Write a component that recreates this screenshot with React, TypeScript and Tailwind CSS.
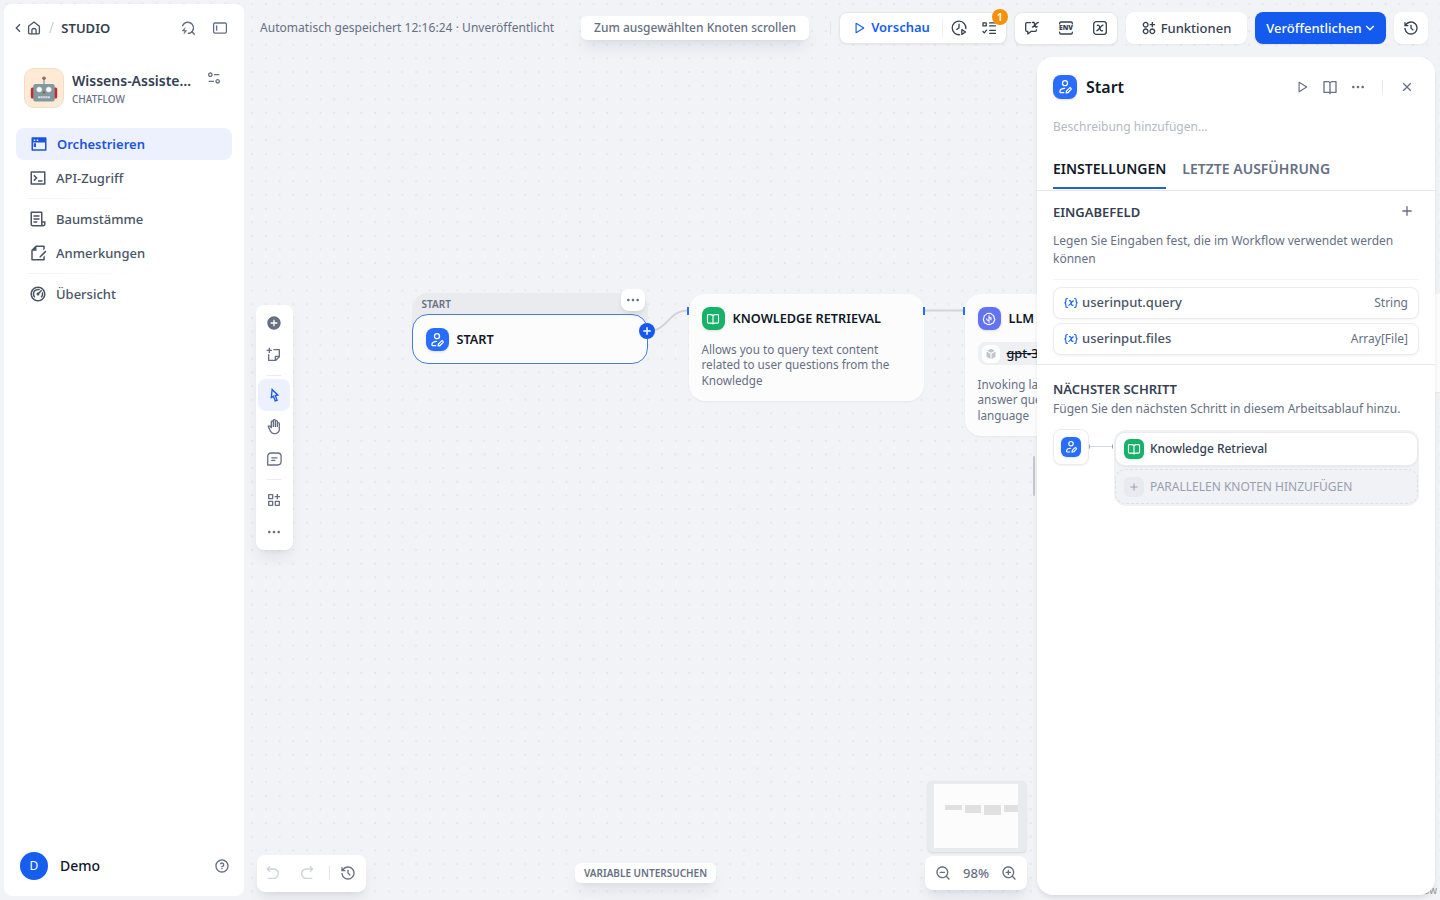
import type { ReactNode } from 'react'
import {
  RiAddCircleFill,
  RiAddLine,
  RiApps2AddLine,
  RiArrowDownSLine,
  RiArrowGoBackLine,
  RiArrowGoForwardLine,
  RiArrowLeftSLine,
  RiBookOpenLine,
  RiCloseLine,
  RiCursorLine,
  RiDashboard2Line,
  RiEqualizer2Line,
  RiFileEditLine,
  RiFileList3Line,
  RiFunctionAddLine,
  RiHand,
  RiHistoryLine,
  RiMoreFill,
  RiPlayLargeLine,
  RiQuestionLine,
  RiStickyNoteAddLine,
  RiTerminalBoxLine,
  RiTerminalWindowFill,
  RiZoomInLine,
  RiZoomOutLine,
} from 'react-icons/ri'
import clsx from 'clsx'

type IconProps = { className?: string }

function Stroke({ className, children }: IconProps & { children: ReactNode }) {
  return (
    <svg viewBox="0 0 16 16" fill="none" stroke="currentColor" strokeWidth="1.3" strokeLinecap="round" strokeLinejoin="round" className={className}>
      {children}
    </svg>
  )
}

const HomeIcon = ({ className }: IconProps) => (
  <Stroke className={className}>
    <path d="M2.6 6.2 8 2l5.4 4.2v6.5c0 .7-.4 1.1-1.1 1.1H3.7c-.7 0-1.1-.4-1.1-1.1z" />
    <path d="M5.9 13.6v-3a2.1 2.1 0 0 1 4.2 0v3" />
  </Stroke>
)

const GoToIcon = ({ className }: IconProps) => (
  <Stroke className={className}>
    <path d="M2.6 5.6a5.7 5.7 0 1 1 7.2 7.7H8.4M12 11.7l2.3 2.5" strokeWidth="1.5" />
    <path d="M5 7.7 2 11h2.5l-.6 3.1 3-3.6H4.4z" fill="currentColor" strokeWidth=".4" />
  </Stroke>
)

const SidebarIcon = ({ className }: IconProps) => (
  <Stroke className={className}>
    <rect x="1.6" y="3" width="12.8" height="10.2" rx="1.4" />
    <path d="M4.6 6v4.2" />
  </Stroke>
)

const CommentIcon = ({ className }: IconProps) => (
  <Stroke className={className}>
    <path d="M1.7 14V5.400c0-2 1.400-3.400 3.400-3.400h6.600c2 0 3.400 1.400 3.400 3.400V10.600c0 2-1.400 3.400-3.400 3.400z" />
    <path d="M5.8 6.800h5.200M5.800 9.400h3" />
  </Stroke>
)

const RunHistoryIcon = ({ className }: IconProps) => (
  <Stroke className={className}>
    <path d="M8.6 14.7a6.8 6.8 0 1 1 6.200-6.100M8 4.200V8L5.800 9.400" />
    <path d="M10.8 9.600v4.800l3.700-2.400z" />
  </Stroke>
)

const ChecklistIcon = ({ className }: IconProps) => (
  <Stroke className={className}>
    <path d="M2 2.900h3.200v3H2zM2 11.500l1.300 1.400 2.300-2.700M8.600 2.900h5.800M8.600 5.900h5.800M8.600 10.300h5.800M8.600 13.300h5.800" />
  </Stroke>
)

const ChatVariableIcon = ({ className }: IconProps) => (
  <Stroke className={className}>
    <path d="M6.600 2.600H2.800c-.7 0-1.100.4-1.100 1.100v6.600c0 .7.400 1.100 1.100 1.100h1v2.700l3.200-2.700h4.300c.7 0 1.100-.4 1.100-1.100V9.700" />
    <path d="M8.600 2.400c1.800-.6 1.600.5 2.100 2.300.5 1.700.7 2.700 2.400 2.100M14.200 2.400c-1.700-.3-4.100 4.700-5.700 4.600" strokeWidth="1.500" />
  </Stroke>
)

const EnvIcon = ({ className }: IconProps) => (
  <svg viewBox="0 0 16 16" className={className}>
    <path d="M1.700 3.900V3.200c0-.7.500-1.200 1.200-1.200h10.200c.7 0 1.200.5 1.200 1.200v.7M1.700 12.100v.7c0 .7.500 1.200 1.200 1.200h10.200c.7 0 1.200-.5 1.200-1.200v-.7" fill="none" stroke="currentColor" strokeWidth="1.300" strokeLinecap="round" />
    <text x="8" y="10.300" textAnchor="middle" textLength="14" lengthAdjust="spacingAndGlyphs" fontSize="6.400" fontWeight="900" fill="currentColor">ENV</text>
  </svg>
)

const GlobalVariableIcon = ({ className }: IconProps) => (
  <Stroke className={className}>
    <rect x="1.700" y="1.700" width="12.600" height="12.600" rx="2.600" />
    <path d="M5.300 5.300c2-.7 1.900.5 2.500 2.600.6 2 .9 3.400 2.800 2.700M11 5.200c-2-.2-4.300 5.500-6.200 5.500" />
  </Stroke>
)

const VariableIcon = ({ className }: IconProps) => (
  <Stroke className={className}>
    <path d="M3.900 2.800c-1.500 0-1.800.6-1.800 1.900v1.600c0 1-.4 1.500-1.300 1.700.9.200 1.300.7 1.300 1.700v1.600c0 1.300.3 1.900 1.800 1.900M12.100 2.800c1.500 0 1.800.6 1.800 1.900v1.600c0 1 .4 1.500 1.300 1.700-.9.200-1.300.7-1.300 1.700v1.600c0 1.300-.3 1.900-1.800 1.900" />
    <path d="M6 5.500c1.800-.6 1.700.5 2.100 2.400.4 1.900.6 3.200 2.300 2.600M10.700 5.500c-1.700-.2-3.500 5.200-5.400 5.100" />
  </Stroke>
)

const UserEditIcon = ({ className }: IconProps) => (
  <Stroke className={className}>
    <circle cx="8" cy="4.200" r="2.500" />
    <path d="M7.600 9.400c-2.600 0-4.500 1.400-4.700 3.100-.1.800.4 1.200 1 1.200h2.800" />
    <path d="m9.200 13.800.3-1.900 2.900-2.800c.9-.9 2.400.5 1.500 1.500l-2.800 2.900z" />
  </Stroke>
)

const BookIcon = ({ className }: IconProps) => (
  <Stroke className={className}>
    <path d="M8 4c-.8-.7-1.700-1-2.900-1H2.700c-.6 0-1 .4-1 1v7.700c0 .6.400 1 1 1h3c1 0 1.700.2 2.300.8.600-.6 1.300-.8 2.300-.8h3c.6 0 1-.4 1-1V4c0-.6-.4-1-1-1h-2.400C9.700 3 8.800 3.300 8 4zM8 4v9.300" />
  </Stroke>
)

const BrainIcon = ({ className }: IconProps) => (
  <Stroke className={className}>
    <path d="M8 1.800c-1.400-.6-3 0-3.500 1.400C2.900 3.600 2 5.200 2.300 6.700c-1 1-1 2.700-.1 3.600.1 1.700 1.300 2.700 2.700 2.800.9 1.200 2.200 1.500 3.100.9.900.6 2.200.3 3.100-.9 1.400-.1 2.600-1.100 2.700-2.800.9-.9.900-2.600-.1-3.600.3-1.500-.6-3.100-2.200-3.500C11 1.800 9.400 1.200 8 1.800z" />
    <path d="M8 4.400v7.400M8 9.400H6L5.200 8M8 6.500h2.200v2.300" />
  </Stroke>
)

const RobotIcon = ({ className }: IconProps) => (
  <svg viewBox="0 0 28 28" className={className}>
    <path d="M14 5v6" stroke="#78909c" strokeWidth="1.200" />
    <circle cx="14" cy="4.300" r="1.800" fill="#8b6a6a" />
    <rect x=".8" y="13.500" width="4" height="11" rx="1.500" fill="#c62836" />
    <rect x="23.200" y="13.500" width="4" height="11" rx="1.500" fill="#c62836" />
    <rect x="3.300" y="10" width="21.400" height="17.500" rx="2" fill="#82989f" />
    <circle cx="9.300" cy="15.500" r="2.600" fill="#fff" stroke="#c5d0d4" strokeWidth=".6" />
    <circle cx="18.700" cy="15.500" r="2.600" fill="#fff" stroke="#c5d0d4" strokeWidth=".6" />
    <path d="m14 16.800 1.200 2.400h-2.400z" fill="#c62836" />
    <rect x="8" y="22.300" width="12" height="2" rx=".6" fill="#d7dee0" />
    <path d="M10.500 22.300v2M12.900 22.300v2M15.300 22.300v2M17.700 22.300v2" stroke="#82989f" strokeWidth=".5" />
  </svg>
)

const CubeIcon = ({ className }: IconProps) => (
  <svg viewBox="0 0 16 16" fill="currentColor" className={className}>
    <path d="m8 1 5.200 2.600L8 6.200 2.800 3.600zM2 4.800l5.300 2.700v7L2 11.800zM14 4.800v7l-5.300 2.700v-7z" />
  </svg>
)

function BlockIcon({ className, children }: IconProps & { children: ReactNode }) {
  return <span className={clsx('flex shrink-0 items-center justify-center text-white shadow-sm', className)}>{children}</span>
}

function NavItem({ icon, label, active }: { icon: ReactNode; label: string; active?: boolean }) {
  return (
    <a
      className={clsx(
        'flex h-8 items-center rounded-lg text-[13px]',
        active ? 'bg-[#edf1fd] pl-3.5 font-semibold text-[#1b55de]' : 'pl-[13px] font-medium text-[#495464]',
      )}
    >
      {icon}
      <span className="ml-[9px] pt-px">{label}</span>
    </a>
  )
}

function Sidebar() {
  return (
    <aside className="z-10 my-1 ml-1 flex w-60 shrink-0 flex-col rounded-lg bg-white">
      <div className="flex h-12 items-center px-2.5 text-[#495464]">
        <RiArrowLeftSLine className="-ml-1 size-4" />
        <HomeIcon className="size-4" />
        <span className="ml-[7px] text-sm font-light text-[#b5bac4]">/</span>
        <span className="ml-[7.5px] pt-px text-[13px] font-semibold text-[#354052]">STUDIO</span>
        <GoToIcon className="ml-auto size-4 text-[#676f83]" />
        <SidebarIcon className="mr-1.5 ml-4 size-4 text-[#676f83]" />
      </div>
      <div className="mt-4 flex px-5">
        <div className="flex size-10 shrink-0 items-center justify-center rounded-[10px] border border-[#f3dcc6] bg-[#ffead5]">
          <RobotIcon className="size-7" />
        </div>
        <div className="ml-2 w-[120px]">
          <p className="mt-[3px] truncate text-sm leading-5 font-semibold text-[#354052]">Wissens-Assistent</p>
          <p className="text-[10px] leading-4 font-medium text-[#676f83]">CHATFLOW</p>
        </div>
        <RiEqualizer2Line className="mt-0.5 ml-3.5 size-4 text-[#676f83]" />
      </div>
      <nav className="mt-5 flex flex-col px-3">
        <NavItem active icon={<RiTerminalWindowFill className="size-[18px]" />} label="Orchestrieren" />
        <div className="h-0.5" />
        <NavItem icon={<RiTerminalBoxLine className="size-[18px]" />} label="API-Zugriff" />
        <div className="my-1 ml-3 h-px w-28 bg-linear-to-r from-[#f1f2f5] to-white" />
        <NavItem icon={<RiFileList3Line className="size-[18px]" />} label="Baumstämme" />
        <div className="h-0.5" />
        <NavItem icon={<RiFileEditLine className="size-[18px]" />} label="Anmerkungen" />
        <div className="my-1 ml-3 h-px w-28 bg-linear-to-r from-[#f1f2f5] to-white" />
        <NavItem icon={<RiDashboard2Line className="size-[18px]" />} label="Übersicht" />
      </nav>
      <div className="mt-auto mb-4 flex items-center px-4">
        <span className="flex size-7 items-center justify-center rounded-full bg-[#155eef] text-xs text-white">D</span>
        <span className="ml-3 text-sm font-medium text-[#101828]">Demo</span>
        <RiQuestionLine className="mr-[-2px] ml-auto size-4 text-[#676f83]" />
      </div>
    </aside>
  )
}

function TopBar() {
  return (
    <header className="flex h-14 items-center pr-3 pl-4">
      <span className="text-xs tracking-[0.04px] whitespace-nowrap text-[#676f83]">Automatisch gespeichert 12:16:24 · Unveröffentlicht</span>
      <button className="ml-auto h-6 w-[228px] rounded-md bg-white text-xs font-medium whitespace-nowrap text-[#676f83] shadow-lg shadow-gray-900/8">
        Zum ausgewählten Knoten scrollen
      </button>
      <div className="mr-2 ml-[21px] h-3.5 w-px bg-[#e3e5ea]" />
      <div className="relative flex h-8 w-[168px] items-center rounded-lg border border-[#e4e7ec] bg-white shadow-xs">
        <span className="flex w-[103px] items-center justify-center border-r border-[#eef0f3] text-[13px] font-semibold text-[#155eef]">
          <RiPlayLargeLine className="mr-[5px] size-3.5" />
          Vorschau
        </span>
        <RunHistoryIcon className="ml-2 size-4 text-[#354052]" />
        <ChecklistIcon className="ml-3.5 size-4 text-[#354052]" />
        <span className="absolute -top-1 -right-0.5 flex size-4 items-center justify-center rounded-full bg-[#f79009] text-[11px] font-semibold text-white">1</span>
      </div>
      <div className="ml-[7px] flex h-[33px] w-[104px] items-center justify-between rounded-lg border border-[#e4e7ec] bg-white px-[9px] text-[#354052] shadow-xs">
        <ChatVariableIcon className="size-4" />
        <EnvIcon className="size-4" />
        <GlobalVariableIcon className="size-4" />
      </div>
      <button className="ml-2 flex h-8 w-[121px] items-center justify-center rounded-lg bg-white text-[13px] font-medium text-[#354052] shadow-xs">
        <RiApps2AddLine className="mr-1 -ml-px size-4" />
        <span className="pt-px">Funktionen</span>
      </button>
      <button className="ml-2 flex h-8 w-[131px] items-center justify-center rounded-lg bg-[#155aef] pl-[3px] text-[13px] font-medium text-white shadow-xs">
        <span className="pt-px">Veröffentlichen</span>
        <RiArrowDownSLine className="size-4" />
      </button>
      <button className="ml-2 flex h-8 w-[34px] items-center justify-center rounded-lg bg-white text-[#354052] shadow-xs">
        <RiHistoryLine className="size-4" />
      </button>
    </header>
  )
}

function ToolButton({ active, children }: { active?: boolean; children: ReactNode }) {
  return (
    <button className={clsx('flex size-8 items-center justify-center rounded-lg', active ? 'bg-[#edf1fd] text-[#155eef]' : 'text-[#676f83]')}>
      {children}
    </button>
  )
}

function Toolbar() {
  return (
    <div className="mt-[249px] ml-3 flex w-[37px] flex-col items-center rounded-lg bg-white pt-0.5 pb-0.5 shadow-lg shadow-gray-900/8">
      <div className="-ml-px flex flex-col items-center">
        <ToolButton><RiAddCircleFill className="size-4" /></ToolButton>
        <ToolButton><RiStickyNoteAddLine className="size-4" /></ToolButton>
        <div className="mt-1 mb-[3px] h-px w-3.5 bg-[#e9ebf0]" />
        <ToolButton active><RiCursorLine className="size-4" /></ToolButton>
        <ToolButton><RiHand className="size-4" /></ToolButton>
        <ToolButton><CommentIcon className="size-4" /></ToolButton>
        <div className="my-1 h-px w-3.5 bg-[#e9ebf0]" />
        <ToolButton><RiFunctionAddLine className="size-4" /></ToolButton>
        <ToolButton><RiMoreFill className="size-4" /></ToolButton>
      </div>
    </div>
  )
}

function MiniMap() {
  return (
    <div className="ml-[3px] h-[71px] w-[98px] rounded bg-[#e8eaee] py-[3px] pl-1.5 shadow-sm">
      <div className="flex h-16 w-[84px] items-start gap-[3px] overflow-hidden bg-[#fcfcfd] pt-[21px] pl-[11px]">
        <span className="h-[5px] w-[17px] shrink-0 bg-[#e0e0e0]" />
        <span className="h-2 w-4 shrink-0 bg-[#e0e0e0]" />
        <span className="h-2.5 w-[17px] shrink-0 bg-[#e0e0e0]" />
        <span className="h-[7px] w-[17px] shrink-0 bg-[#e0e0e0]" />
      </div>
    </div>
  )
}

function Operator() {
  return (
    <div className="mb-2 flex items-end pr-2.5 pl-[13px] text-[#676f83]">
      <div className="flex h-[37px] w-[109px] items-center rounded-lg bg-white pb-px shadow-lg shadow-gray-900/8">
        <RiArrowGoBackLine className="ml-2 size-4 text-[#d0d3da]" />
        <RiArrowGoForwardLine className="ml-[18px] size-4 text-[#d0d3da]" />
        <div className="ml-3.5 h-3.5 w-px bg-[#e3e5ea]" />
        <RiHistoryLine className="ml-2.5 size-4" />
      </div>
      <button className="mb-[9px] ml-[209px] h-5 w-[141px] rounded-md bg-white text-[10px] font-semibold whitespace-nowrap shadow-lg shadow-gray-900/8">
        VARIABLE UNTERSUCHEN
      </button>
      <div className="mb-0.5 ml-auto flex flex-col">
        <MiniMap />
        <div className="mt-1 flex h-[34px] w-[102px] items-center justify-between rounded-lg bg-white px-2.5 text-[13px] shadow-lg shadow-gray-900/8">
          <RiZoomOutLine className="size-4" />
          <span className="pt-px font-medium">98%</span>
          <RiZoomInLine className="size-4" />
        </div>
      </div>
    </div>
  )
}

function VariableRow({ name, type }: { name: string; type: string }) {
  return (
    <div className="flex h-8 items-center rounded-lg border border-[#eaecf0] bg-white px-2.5 shadow-xs">
      <VariableIcon className="size-3.5 text-[#155eef]" />
      <span className="ml-1 text-[13px] font-medium text-[#495464]">{name}</span>
      <span className="ml-auto text-xs text-[#676f83]">{type}</span>
    </div>
  )
}

function NodePanel() {
  return (
    <section className="mt-px mr-[5px] mb-[5px] flex w-[398px] shrink-0 flex-col rounded-2xl bg-white shadow-md shadow-gray-900/8">
      <div className="mt-[18px] flex h-6 items-center px-4">
        <BlockIcon className="size-6 rounded-lg bg-[#296dff]"><UserEditIcon className="size-4" /></BlockIcon>
        <h2 className="ml-[9px] text-base font-semibold text-[#101828]">Start</h2>
        <div className="mr-1 ml-auto flex items-center text-[#676f83]">
          <RiPlayLargeLine className="size-3.5" />
          <RiBookOpenLine className="ml-[13px] size-4" />
          <RiMoreFill className="ml-3 size-4" />
          <div className="mx-4 h-3.5 w-px bg-[#e9ebf0]" />
          <RiCloseLine className="size-4" />
        </div>
      </div>
      <p className="mt-[19px] px-4 text-xs leading-[18px] text-[#b3b9c5]">Beschreibung hinzufügen...</p>
      <div className="mt-[13px] flex h-[42px] gap-4 border-b border-[#e6e8ec] px-4 text-sm font-semibold">
        <span className="flex h-10 items-center border-b-2 border-[#2462c8] pt-0.5 text-[#101828]">EINSTELLUNGEN</span>
        <span className="flex h-10 items-center border-b-2 border-transparent pt-0.5 text-[#676f83]">LETZTE AUSFÜHRUNG</span>
      </div>
      <div className="border-b border-[#e6e8ec] px-4 pb-[9px]">
        <div className="mt-3 flex items-start text-[13px] leading-[18px] font-semibold text-[#354052]">
          EINGABEFELD
          <RiAddLine className="mr-1 ml-auto size-4 text-[#676f83]" />
        </div>
        <p className="mt-[11px] text-xs leading-[18px] text-[#676f83]">Legen Sie Eingaben fest, die im Workflow verwendet werden können</p>
        <div className="mt-[11px] mb-[7px] h-px bg-[#f2f4f7]" />
        <div className="flex flex-col gap-1">
          <VariableRow name="userinput.query" type="String" />
          <VariableRow name="userinput.files" type="Array[File]" />
        </div>
      </div>
      <div className="px-4 pt-[15px]">
        <p className="text-[13px] leading-[18px] font-semibold text-[#354052]">NÄCHSTER SCHRITT</p>
        <p className="mt-0.5 text-xs leading-[18px] text-[#676f83]">Fügen Sie den nächsten Schritt in diesem Arbeitsablauf hinzu.</p>
        <div className="mt-[11px] flex">
          <div className="flex size-9 items-center justify-center rounded-lg border border-[#eaecf0] bg-white shadow-xs">
            <BlockIcon className="size-5 rounded-md bg-[#296dff]"><UserEditIcon className="size-3.5" /></BlockIcon>
          </div>
          <svg className="h-9 w-[25px]" viewBox="0 0 25 36" fill="none">
            <path d="M1 17.5h23" stroke="#d5d9e0" />
            <path d="M.5 15.5v4M23.5 15.5v4" stroke="#98a2b3" />
          </svg>
          <div className="mt-px flex h-[76px] flex-1 flex-col rounded-xl bg-[#f0f2f6] px-px py-0.5">
            <div className="flex h-[35px] items-center rounded-[10px] border border-[#e9ebf0] bg-white pl-2 text-xs font-medium text-[#354052] shadow-xs">
              <BlockIcon className="mr-1.5 size-5 rounded-md bg-[#17b26a]"><BookIcon className="size-3.5" /></BlockIcon>
              Knowledge Retrieval
            </div>
            <div className="mt-[3px] flex h-9 items-center rounded-[10px] border border-dashed border-[#dcdfe5] pl-2 text-xs text-[#98a0b0]">
              <span className="mr-1.5 flex size-5 items-center justify-center rounded-md bg-[#e8eaef]"><RiAddLine className="size-3" /></span>
              PARALLELEN KNOTEN HINZUFÜGEN
            </div>
          </div>
        </div>
      </div>
    </section>
  )
}

function NodeTitle({ color, icon, title }: { color: string; icon: ReactNode; title: string }) {
  return (
    <div className="flex items-center text-[12.7px] font-semibold text-[#101828]">
      <BlockIcon className={clsx('mr-2 size-[23px] rounded-lg', color)}>{icon}</BlockIcon>
      {title}
    </div>
  )
}

// Node positions are in screen space for the current 98% viewport
function Canvas() {
  return (
    <div className="absolute inset-0 overflow-hidden bg-[#f1f3f7] bg-[radial-gradient(circle_at_center,#e4e7ec_0.7px,transparent_1.1px)] bg-[length:13.66px_13.66px] bg-[position:-0.4px_-3.1px]">
      <svg className="absolute inset-0 size-full" fill="none" stroke="#d0d5dc" strokeWidth="2">
        <path d="M648 331c20 0 20-20.5 40-20.5M924 310.5h41" />
      </svg>

      <div className="absolute top-[293px] left-[412px] h-[60px] w-[236px] rounded-2xl bg-[#e9ebee] pt-[3px] pl-[9.5px] text-[10px] leading-4 font-semibold text-[#676f83]">START</div>
      <div className="absolute top-[314px] left-[412px] flex h-[50px] w-[236px] items-center rounded-2xl border border-[#437de2] bg-[#fcfcfd] pt-px pl-[12.5px]">
        <NodeTitle color="bg-[#296dff]" icon={<UserEditIcon className="size-4" />} title="START" />
      </div>
      <div className="absolute top-[289px] left-[621px] flex h-[22px] w-6 items-center justify-center rounded-lg bg-white text-[#676f83] shadow-md shadow-gray-900/8">
        <RiMoreFill className="size-4" />
      </div>
      <div className="absolute top-[323px] left-[639px] flex size-4 items-center justify-center rounded-full bg-[#155aef] text-white">
        <RiAddLine className="size-3" strokeWidth="1" />
      </div>

      <div className="absolute top-[294px] left-[688.5px] h-[107px] w-[235px] rounded-2xl bg-[#fcfcfd] px-[13px] pt-[13px] shadow-xs">
        <NodeTitle color="bg-[#17b26a]" icon={<BookIcon className="size-3.5" />} title="KNOWLEDGE RETRIEVAL" />
        <p className="mt-[11.5px] text-[11.7px] leading-[15.6px] text-[#676f83]">Allows you to query text content related to user questions from the Knowledge</p>
      </div>
      <div className="absolute top-[294px] left-[965px] h-[142px] w-[234px] rounded-2xl bg-[#fcfcfd] px-[12.5px] pt-[13px] shadow-xs">
        <NodeTitle color="bg-[#6172f3]" icon={<BrainIcon className="size-3.5" />} title="LLM" />
        <div className="mt-3 flex h-[23px] items-center rounded-lg bg-[#eff0f3] pl-1 text-[12.7px] font-medium text-[#101828]">
          <span className="mr-[7px] flex size-[18px] items-center justify-center rounded-md bg-white text-[#bfc4cd]"><CubeIcon className="size-3" /></span>
          <span className="line-through">gpt-3.5-turbo</span>
        </div>
        <p className="mt-[11.5px] text-[11.7px] leading-[15.6px] text-[#676f83]">Invoking large language models to answer questions or process natural language</p>
      </div>
      <div className="absolute top-[294px] left-[1241px] h-[98px] w-[234px] rounded-2xl bg-[#fcfcfd] shadow-xs" />

      <span className="absolute top-[307px] left-[687px] h-2 w-0.5 bg-[#296dff]" />
      <span className="absolute top-[307px] left-[923px] h-2 w-0.5 bg-[#296dff]" />
      <span className="absolute top-[307px] left-[963px] h-2 w-0.5 bg-[#296dff]" />

      <span className="absolute right-[3px] bottom-1 text-[10px] leading-3 text-[#999]">React Flow</span>
      <span className="absolute top-[456px] left-[1033px] h-10 w-0.5 rounded-full bg-[#c3c7cf]" />
    </div>
  )
}

export default function App() {
  return (
    <div className="relative flex h-screen w-screen overflow-hidden bg-[#f2f4f7] font-['Noto_Sans',sans-serif]">
      <Canvas />
      <Sidebar />
      <main className="z-10 flex min-w-0 flex-1 flex-col">
        <TopBar />
        <div className="flex min-h-0 flex-1">
          <div className="flex min-w-0 flex-1 flex-col justify-between">
            <Toolbar />
            <Operator />
          </div>
          <NodePanel />
        </div>
      </main>
    </div>
  )
}
